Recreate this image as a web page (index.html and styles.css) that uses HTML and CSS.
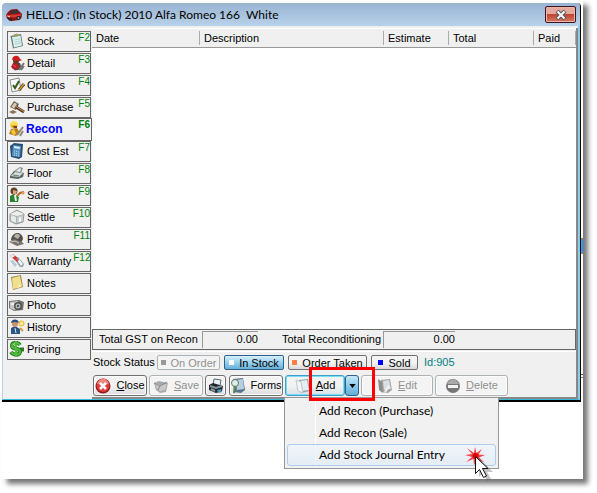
FILE: index.html
```html
<!DOCTYPE html>
<html lang="en">
<head>
<meta charset="utf-8">
<title>HELLO : (In Stock) 2010 Alfa Romeo 166 White</title>
<link rel="stylesheet" href="styles.css">
</head>
<body>
<main class="sheet">
<section class="window">
  <header class="titlebar">
    <svg class="icon" viewBox="0 0 16 16"><path d="M0 8 2 5 5 2.500 11 2 14 5 16 7 15.500 11 13 13 6 14 1 11.500Z" fill="#8c1414"/><path d="M4 6 6 3.500 11 3 12.500 5.500 9 7Z" fill="#38353a"/><path d="M1 8 9 7.500 15 7 14.500 9 8 10.500 1 9.500Z" fill="#d63a35"/><path d="M1 11 6 12 6 14 3 13.500Z" fill="#222"/><circle cx="12.500" cy="11" r="2" fill="#222"/><circle cx="12.500" cy="11" r="1" fill="#999"/><path d="M1.500 9 4 10" stroke="#ffd9c8"/></svg>
    <h1>HELLO : (In Stock) 2010 Alfa Romeo 166&nbsp; White</h1>
    <button class="close" aria-label="Close window"><svg viewBox="0 0 12 10"><path d="M2 1 10 9M10 1 2 9" stroke="#53565f" stroke-width="4"/><path d="M2.500 1.500 9.500 8.500M9.500 1.500 2.500 8.500" stroke="#fff" stroke-width="2"/></svg></button>
  </header>
  <div class="client">
    <nav class="tabs">
      <button><svg class="icon" viewBox="0 0 16 16"><path d="M1.500 3 12 1 14 13 4 15.500Z" fill="#5d7a72"/><path d="M3 4 11.500 2.500 13 12.500 5 14.500Z" fill="#d9f0ef"/><path d="M4.500 1.500 8.500 0.500 10 3 5 4z" fill="#a39a62"/><path d="M5 7 11 6M5.500 9 11.500 8M6 11 12 10" stroke="#b4d4d4"/></svg><span>Stock</span><kbd>F2</kbd></button>
      <button><svg class="icon" viewBox="0 0 16 16"><path d="M3 13 5 8 11 8 13 14 6 15.500Z" fill="#48494c"/><path d="M4 8 9 7 10 13 6 15 2 12Z" fill="#b32122"/><circle cx="7" cy="6" r="3" fill="#6b3526"/><path d="M3 5C3 0 10-1 11 4L13 5 11 6Z" fill="#d01f20"/><path d="M10 15 15 8M12 15 15 11" stroke="#777" stroke-width="2"/><path d="M4 10 7 12" stroke="#f38"/></svg><span>Detail</span><kbd>F3</kbd></button>
      <button><svg class="icon" viewBox="0 0 16 16"><path d="M1 3 10 1 12 13 3 15Z" fill="#f7faf8" stroke="#858d90"/><path d="M4 8 6 11 10 4" fill="none" stroke="#385b18" stroke-width="2"/><path d="M10 13 15 7" stroke="#79551e" stroke-width="3"/><path d="M10 13 15 7" stroke="#e7ba55"/></svg><span>Options</span><kbd>F4</kbd></button>
      <button><svg class="icon" viewBox="0 0 16 16"><path d="M1 8 5 2 10 5 7 11Z" fill="#706353"/><path d="M2.500 7.500 5.500 3.500 8 5 5 9.500Z" fill="#d6cbb8"/><path d="M7 8 15 13" stroke="#57371d" stroke-width="3"/><path d="M7 7.500 15 12.500" stroke="#c19b70"/><path d="M0 13 4 11 8 13 4 15Z" fill="#8c7455"/></svg><span>Purchase</span><kbd>F5</kbd></button>
      <button class="selected"><svg class="icon" viewBox="0 0 16 16"><circle cx="6" cy="4" r="3.500" fill="#eeb51c"/><path d="M2 4C2-1 10-1 10 4Z" fill="#ffdc52"/><path d="M1 13 3 8 9 7 12 12 8 15Z" fill="#b88220"/><path d="M3 10 6 8 8 13 5 14Z" fill="#f7c93d"/><path d="M9 14 15 6M12 15 15 10" stroke="#8f8979" stroke-width="2"/><path d="M5 5h4v2H6z" fill="#6b4328"/></svg><span>Recon</span><kbd>F6</kbd></button>
      <button><svg class="icon" viewBox="0 0 16 16"><path d="M1 3 5 0 14 1 13 14 10 16 2 14Z" fill="#294e73"/><path d="M4 2 12 3 11 14 3 13Z" fill="#5793c2"/><path d="M5 3 11 4 10.500 6 5 5Z" fill="#d9f1fa"/><path d="M5 8 10 9M5 10 10 11M5 12 10 13" stroke="#bcdced" stroke-dasharray="1 1"/></svg><span>Cost Est</span><kbd>F7</kbd></button>
      <button><svg class="icon" viewBox="0 0 16 16"><path d="M1 11 5 6 15 8 14 12 9 14 1 13Z" fill="#5b6768"/><path d="M2 11 6 7 14 8 10 12Z" fill="#d5dddb"/><path d="M5 6 11 2 14 3 12 8Z" fill="#899395"/><path d="M7 6 11 3 12 4 11 7Z" fill="#e9eff0"/><path d="M4 10 10 11" stroke="#647b72"/></svg><span>Floor</span><kbd>F8</kbd></button>
      <button><svg class="icon" viewBox="0 0 16 16"><path d="M1 15V9L5 7 10 10 9 15Z" fill="#25822d"/><circle cx="5" cy="4" r="3.500" fill="#674126"/><path d="M4 3 8 4 7 7 4 7Z" fill="#d8a276"/><path d="M6 8 7 14" stroke="#eee" stroke-width="2"/><path d="M8 9 11 6 15 5" fill="none" stroke="#b8682d" stroke-width="2"/><circle cx="14" cy="6" r="1.500" fill="#e09b5e"/></svg><span>Sale</span><kbd>F9</kbd></button>
      <button><svg class="icon" viewBox="0 0 16 16"><path d="M1 5 8 1 15 5 14 13 7 15 1 12Z" fill="#adb2b2" stroke="#959999"/><path d="M1 5 8 2 15 5 8 7Z" fill="#edf0ef"/><path d="M2 6 7 8V14L2 12Z" fill="#e6eaea"/><path d="M8 8 14 6V12L8 14Z" fill="#c8cdcd"/><path d="M10 9 12 8V13L10 13Z" fill="#f6f6f6"/></svg><span>Settle</span><kbd>F10</kbd></button>
      <button><svg class="icon" viewBox="0 0 16 16"><path d="M2 9C3 0 13 0 14 8L12 12 7 11Z" fill="#51504d"/><path d="M5 6C6 2 10 2 11 5L9 8Z" fill="#b4b1a9"/><path d="M0 11 5 8 13 11 15 13 8 15Z" fill="#78756d"/><path d="M2 11 6 10 10 12" fill="none" stroke="#d3cfc7"/></svg><span>Profit</span><kbd>F11</kbd></button>
      <button><svg class="icon" viewBox="0 0 16 16"><path d="M1 3 4 1 9 5 7 8Z" fill="#c33a3a"/><path d="M1 3 4 1 6 3 3 5Z" fill="#e8eef4"/><path d="M6 7 9 4 15 11 14 14 11 14Z" fill="#8fa0b0"/><path d="M8 7 10 6 14 11 12 13Z" fill="#eef4f8"/><path d="M6 7 8 5 10 7 8 9Z" fill="#d24642"/><path d="M1 8 4 7 8 12 6 14Z" fill="#b9c8d6"/></svg><span>Warranty</span><kbd>F12</kbd></button>
      <button><svg class="icon" viewBox="0 0 16 16"><path d="M2 2 12 0 14 12 4 15Z" fill="#9d8b4d"/><path d="M3 3 11 1 13 11 9 13 4 14Z" fill="#f1df8c"/><path d="M9 13 10 9 13 11Z" fill="#fff2b5"/></svg><span>Notes</span></button>
      <button><svg class="icon" viewBox="0 0 16 16"><path d="M0 4 10 3 15 5 14 13 5 14 0 11Z" fill="#727473"/><path d="M1 5 9 4 9 12 5 13 1 11Z" fill="#c4c7c5"/><circle cx="9" cy="9" r="4" fill="#4d5151"/><circle cx="9" cy="9" r="2.500" fill="#b2b8b7"/><circle cx="9" cy="9" r="1" fill="#333"/><path d="M2 6h3v2H2z" fill="#eee"/></svg><span>Photo</span></button>
      <button><svg class="icon" viewBox="0 0 16 16"><path d="M2 15V9L6 7 11 10V15Z" fill="#2a5685"/><circle cx="6" cy="5" r="3" fill="#cc946d"/><path d="M2 4C2 0 9-1 10 4L6 3Z" fill="#294f79"/><path d="M6 9 7 14" stroke="#dbe8f0"/><circle cx="12.500" cy="4.500" r="3" fill="#efc250"/><circle cx="12.500" cy="4.500" r="1.500" fill="#fff2b4"/><path d="M11 9 14 12" stroke="#d89d38" stroke-width="2"/></svg><span>History</span></button>
      <button><svg class="icon" viewBox="0 0 16 16"><path d="M11 4C9 1 3 1 3 5 3 9 11 6 11 11 10 15 4 14 2 11M11 8.500H15" fill="none" stroke="#2c7a26" stroke-width="4"/><path d="M11 4C9 1 3 1 3 5 3 9 11 6 11 11 10 15 4 14 2 11M7 0V16" fill="none" stroke="#4fbd3b" stroke-width="2"/><path d="M4 4 6 2.500" stroke="#b7f095"/></svg><span>Pricing</span></button>
    </nav>
    <div class="pane">
      <div class="list">
        <table>
          <colgroup><col class="c-date"><col><col class="c-estimate"><col class="c-total"><col class="c-paid"></colgroup>
          <thead><tr><th>Date</th><th>Description</th><th>Estimate</th><th>Total</th><th>Paid</th></tr></thead>
          <tbody></tbody>
        </table>
      </div>
      <div class="totals">
        <label for="gst">Total GST on Recon</label><input id="gst" class="gst" value="0.00" readonly>
        <label for="recon">Total Reconditioning</label><input id="recon" class="recon" value="0.00" readonly>
      </div>
      <div class="controls">
        <div class="status">
          <span class="caption">Stock Status</span>
          <button class="s-order" disabled><i></i>On Order</button>
          <button class="s-stock active"><i></i>In Stock</button>
          <button class="s-taken"><i></i>Order Taken</button>
          <button class="s-sold"><i></i>Sold</button>
          <span class="record">Id:905</span>
        </div>
        <div class="toolbar">
          <button class="wide"><svg class="icon" viewBox="0 0 16 16"><circle cx="8" cy="8" r="7.500" fill="#901a1b"/><circle cx="8" cy="7.500" r="6.500" fill="#df3c39"/><path d="M2 6C4-1 12-1 14 6Z" fill="#ef8580"/><path d="M5 5 11 11M11 5 5 11" stroke="#fff" stroke-width="2.500"/></svg><span><u>C</u>lose</span></button>
          <button class="wide" disabled><svg class="icon" viewBox="0 0 16 16"><path d="M1 5 6 3 15 5 13 14 7 15 3 12Z" fill="#aaa"/><path d="M2 5 7 7 14 6 12 12 7 13 4 11Z" fill="#c9c9c9"/><path d="M1 5 7 8 14 4M7 8 5 12" fill="none" stroke="#888"/></svg><span><u>S</u>ave</span></button>
          <button class="print" aria-label="Print"><svg class="icon" viewBox="0 0 16 16"><path d="M5 7 6 1 13 2 12 8Z" fill="#e8f2f5" stroke="#536b75"/><path d="M1 7 5 5 15 8 14 13 8 15 1 12Z" fill="#20272c"/><path d="M2 8 8 10 14 8M3 11 7 13" fill="none" stroke="#84929a" stroke-width="2"/><path d="M9 12 13 11 14 14 10 15Z" fill="#4b94b4"/></svg></button>
          <button class="forms"><svg class="icon" viewBox="0 0 16 16"><path d="M3 1 13 0 15 12 11 15 4 14Z" fill="#587392"/><path d="M6 2 13 1 14 11 7 12Z" fill="#b8cfe0"/><circle cx="5" cy="5" r="3.500" fill="#d9efe9" stroke="#63785e"/><path d="M5 8 4 15" stroke="#588747" stroke-width="2"/></svg><span>Forms</span></button>
          <div class="split">
            <button class="add"><svg class="icon" viewBox="0 0 16 16"><path d="M4 2 13 1 15 13 6 15Z" fill="#93a3aa"/><path d="M5 3 12 2 14 12 6 13Z" fill="#e4eef2"/><path d="M1 2 6 4 8 15 3 13Z" fill="#f4f6f6" stroke="#bcc6c9"/></svg><span><u>A</u>dd</span></button>
            <button class="arrow" aria-label="Add options"><svg viewBox="0 0 8 5"><path d="M0 0h8L4 5Z"/></svg></button>
            <div class="marker"></div>
            <div class="menu" role="menu">
              <button role="menuitem">Add Recon (Purchase)</button>
              <button role="menuitem">Add Recon (Sale)</button>
              <button role="menuitem" class="hover">Add Stock Journal Entry</button>
              <svg class="pointer" viewBox="0 0 30 38"><path d="M10 1 11.500 7 17 3 13.500 8.500 20 9 14 11.500 19 16 12 14 9 19 8.500 13 1 16 7 11 0 9 7 8 2 2 9 7Z" fill="#f4444a"/><circle cx="10.500" cy="10" r="3" fill="#e00008"/><path d="M10 9v19l4-4 4 8 4-2-4-7h6Z" fill="#555" opacity=".35" transform="translate(4 3)"/><path d="M10.500 10.500v17l4-4 4 8 3-1.500-4-7.500h5.500Z" fill="#fff" stroke="#111"/></svg>
            </div>
          </div>
          <button class="edit" disabled><svg class="icon" viewBox="0 0 16 16"><path d="M4 2 13 1 15 12 11 15 4 14Z" fill="#a4a4a4"/><path d="M6 3 12 2 14 11 7 12Z" fill="#dedede"/><path d="M1 1 5 4 6 15 2 12Z" fill="#8d8d8d"/><path d="M8 14 12 8" stroke="#f4f4f4" stroke-width="2"/></svg><span><u>E</u>dit</span></button>
          <button class="delete" disabled><svg class="icon" viewBox="0 0 16 16"><circle cx="8" cy="8" r="7" fill="#777"/><path d="M2 6C4 0 12 0 14 6Z" fill="#aaa"/><path d="M3 7h10v3H3z" fill="#f4f4f4"/></svg><span><u>D</u>elete</span></button>
        </div>
      </div>
    </div>
  </div>
</section>
</main>
</body>
</html>
```
FILE: styles.css
```css
* { box-sizing: border-box; }
body {
  margin: 0;
  min-height: 100vh;
  display: flex;
  padding: 0 14px 14px 2px;
  background: #fff;
  font: 11px/13px "Liberation Sans", Arial, sans-serif;
  color: #000;
}
button, input { font: inherit; color: inherit; margin: 0; }
button { padding: 0; white-space: nowrap; }
svg { display: block; flex: none; }
.icon { width: 16px; height: 16px; }

.sheet {
  flex: 1;
  display: flex;
  flex-direction: column;
  padding: 3px 2px 77px 0;
  background:
    linear-gradient(#c87830, #c87830) right 238px / 2px 1px no-repeat,
    linear-gradient(#3399ff, #3399ff) right 239px / 2px 14px no-repeat,
    linear-gradient(#c87830, #c87830) right 253px / 2px 1px no-repeat,
    linear-gradient(#555, #555) right 374px / 2px 1px no-repeat,
    linear-gradient(#888, #888) right 377px / 2px 1px no-repeat,
    #fff;
  box-shadow: 5px 5px 5px #777;
}
.window {
  flex: 1;
  display: flex;
  flex-direction: column;
  border: solid #000;
  border-width: 0 1px 2px 0;
  border-radius: 4px 4px 0 0;
  background: #f0f0f0;
}
.titlebar {
  display: flex;
  align-items: center;
  height: 23px;
  padding: 0 4px;
  gap: 4px;
  border-radius: 4px 4px 0 0;
  background: linear-gradient(#98b4d2, #b9d1ea);
}
.titlebar h1 {
  flex: 1;
  margin: 0;
  font: 12px/20px Lato, "Open Sans", sans-serif;
  white-space: nowrap;
}
.close {
  display: flex;
  align-items: center;
  justify-content: center;
  width: 31px;
  height: 17px;
  border: 1px solid #43141b;
  border-radius: 2px;
  background: linear-gradient(#e5a99d 0 45%, #be4531 50%, #d67a63);
  box-shadow: inset 0 0 0 1px #e9b5a9;
}
.close svg { width: 12px; height: 10px; }
.client {
  flex: 1;
  display: flex;
  gap: 1px;
  border: solid #b9d1ea;
  border-width: 0 2px 0 1px;
  border-right-color: #8ccbe8;
  border-bottom: 1px solid #35bbd9;
}

.tabs {
  display: flex;
  flex-direction: column;
  gap: 1px;
  width: 88px;
  padding: 5px 0 0 4px;
}
.tabs button {
  display: flex;
  align-items: center;
  gap: 2px;
  height: 21px;
  padding: 0 0 1px 1px;
  border: 1px solid #666;
  background: #f0f0f0;
  text-align: left;
}
.tabs span { flex: 1; }
.tabs kbd {
  align-self: flex-start;
  font: 10px/11px "Liberation Sans", Arial, sans-serif;
  color: #008000;
}
.tabs .selected {
  height: 23px;
  margin: -1px -1px -1px -2px;
  padding: 0 1px 1px 2px;
}
.tabs .selected span { font-weight: bold; color: #00f; font-size: 12px; }
.tabs .selected kbd { font-weight: bold; }

.pane {
  flex: 1;
  min-width: 0;
  display: flex;
  flex-direction: column;
  margin-top: 2px;
  border: solid #888;
  border-width: 0 2px 2px 0;
}
.list {
  flex: 1;
  border-top: 1px solid #fff;
  background: #fff;
}
table {
  width: 100%;
  table-layout: fixed;
  border-collapse: separate;
  border-spacing: 0;
}
.c-date { width: 108px; }
.c-estimate { width: 65px; }
.c-total { width: 85px; }
.c-paid { width: 42px; }
th {
  height: 19px;
  padding: 0 0 0 4px;
  border-bottom: 1px solid #999;
  background: linear-gradient(#aaa, #aaa) right center / 1px 14px no-repeat #f0f0f0;
  font-weight: normal;
  text-align: left;
}
.totals {
  display: flex;
  align-items: center;
  height: 21px;
  padding: 0 0 0 6px;
  border: 1px solid #666;
}
.totals label { white-space: nowrap; width: 103px; }
.totals input {
  min-width: 0;
  height: 17px;
  padding: 0 0 2px;
  border: solid #999;
  border-width: 1px 0 0 1px;
  border-radius: 0;
  background: #f0f0f0;
  text-align: right;
}
.totals .gst { width: 56px; margin-right: 24px; }
.totals .recon { width: 72px; }
.totals label + .recon { margin-left: -2px; }

.controls {
  margin-top: 1px;
  padding: 3px 0 1px;
  border-top: 1px solid #fff;
}
.status, .toolbar { display: flex; align-items: center; }
.status { gap: 4px; }
.caption { width: 61px; padding-left: 1px; white-space: nowrap; }
.record { margin-left: 2px; color: #008080; }
.status button {
  display: flex;
  align-items: center;
  justify-content: center;
  gap: 5px;
  height: 15px;
  border: 1px solid #707070;
  border-radius: 2px;
  background: linear-gradient(#f4f4f4 50%, #dadada);
  line-height: 12px;
}
.status i { width: 5px; height: 5px; }
.s-order { width: 63px; }
.s-order i { background: #999; }
.s-stock { width: 60px; }
.s-stock i { background: #fff; }
.s-taken { width: 79px; }
.s-taken i { background: #ff8040; }
.s-sold { width: 47px; }
.s-sold i { background: #00f; }
.status .active {
  border-color: #2c628b;
  background: linear-gradient(#d8effc, #98d1ef 50%, #68afd5);
}
.toolbar { gap: 2px; padding: 5px 0 0 1px; }
.toolbar button {
  display: flex;
  align-items: center;
  justify-content: center;
  gap: 5px;
  height: 21px;
  border: 1px solid #707070;
  border-radius: 3px;
  background: linear-gradient(#f3f3f3 50%, #dddddd);
  box-shadow: inset 0 0 0 1px #fcfcfc;
}
.toolbar button:disabled, .status button:disabled {
  border-color: #adb2b5;
  background: #f4f4f4;
  color: #909090;
}
.toolbar .wide { width: 54px; }
.toolbar .print { width: 21px; }
.toolbar .forms { width: 54px; margin-left: 1px; gap: 4px; }
.toolbar .edit { width: 72px; }
.toolbar .delete { width: 73px; }
.split { position: relative; display: flex; }
.toolbar .add {
  width: 60px;
  border-color: #3c9ec9;
  background: linear-gradient(#f3f3f3 50%, #d5e1e8);
  box-shadow: inset 0 0 0 1px #7bdcf5;
}
.toolbar .arrow {
  width: 14px;
  border-color: #2c628b;
  background: linear-gradient(#c6e7f8, #8dccec 50%, #64add5);
  box-shadow: none;
}
.arrow svg { width: 7px; height: 4px; }
.marker {
  position: absolute;
  z-index: 3;
  left: 24px;
  top: -8px;
  width: 66px;
  height: 34px;
  border: 3px solid #f00;
}
.menu {
  position: absolute;
  z-index: 2;
  left: -1px;
  top: 22px;
  width: 215px;
  padding: 2px;
  border: 1px solid #979797;
  background: linear-gradient(#fff, #fff) 30px 0 / 1px 100% no-repeat #f1f1f1;
}
.menu button {
  width: 100%;
  height: 22px;
  justify-content: flex-start;
  padding: 0 0 0 31px;
  border: 1px solid transparent;
  background: none;
  box-shadow: none;
  font: 12px/18px Lato, "Open Sans", sans-serif;
}
.menu .hover {
  border-color: #aeccf0;
  background: linear-gradient(rgba(240, 246, 253, .7), rgba(224, 235, 248, .7));
}
.pointer {
  position: absolute;
  right: 3px;
  top: 48px;
  width: 30px;
  height: 38px;
}
```
